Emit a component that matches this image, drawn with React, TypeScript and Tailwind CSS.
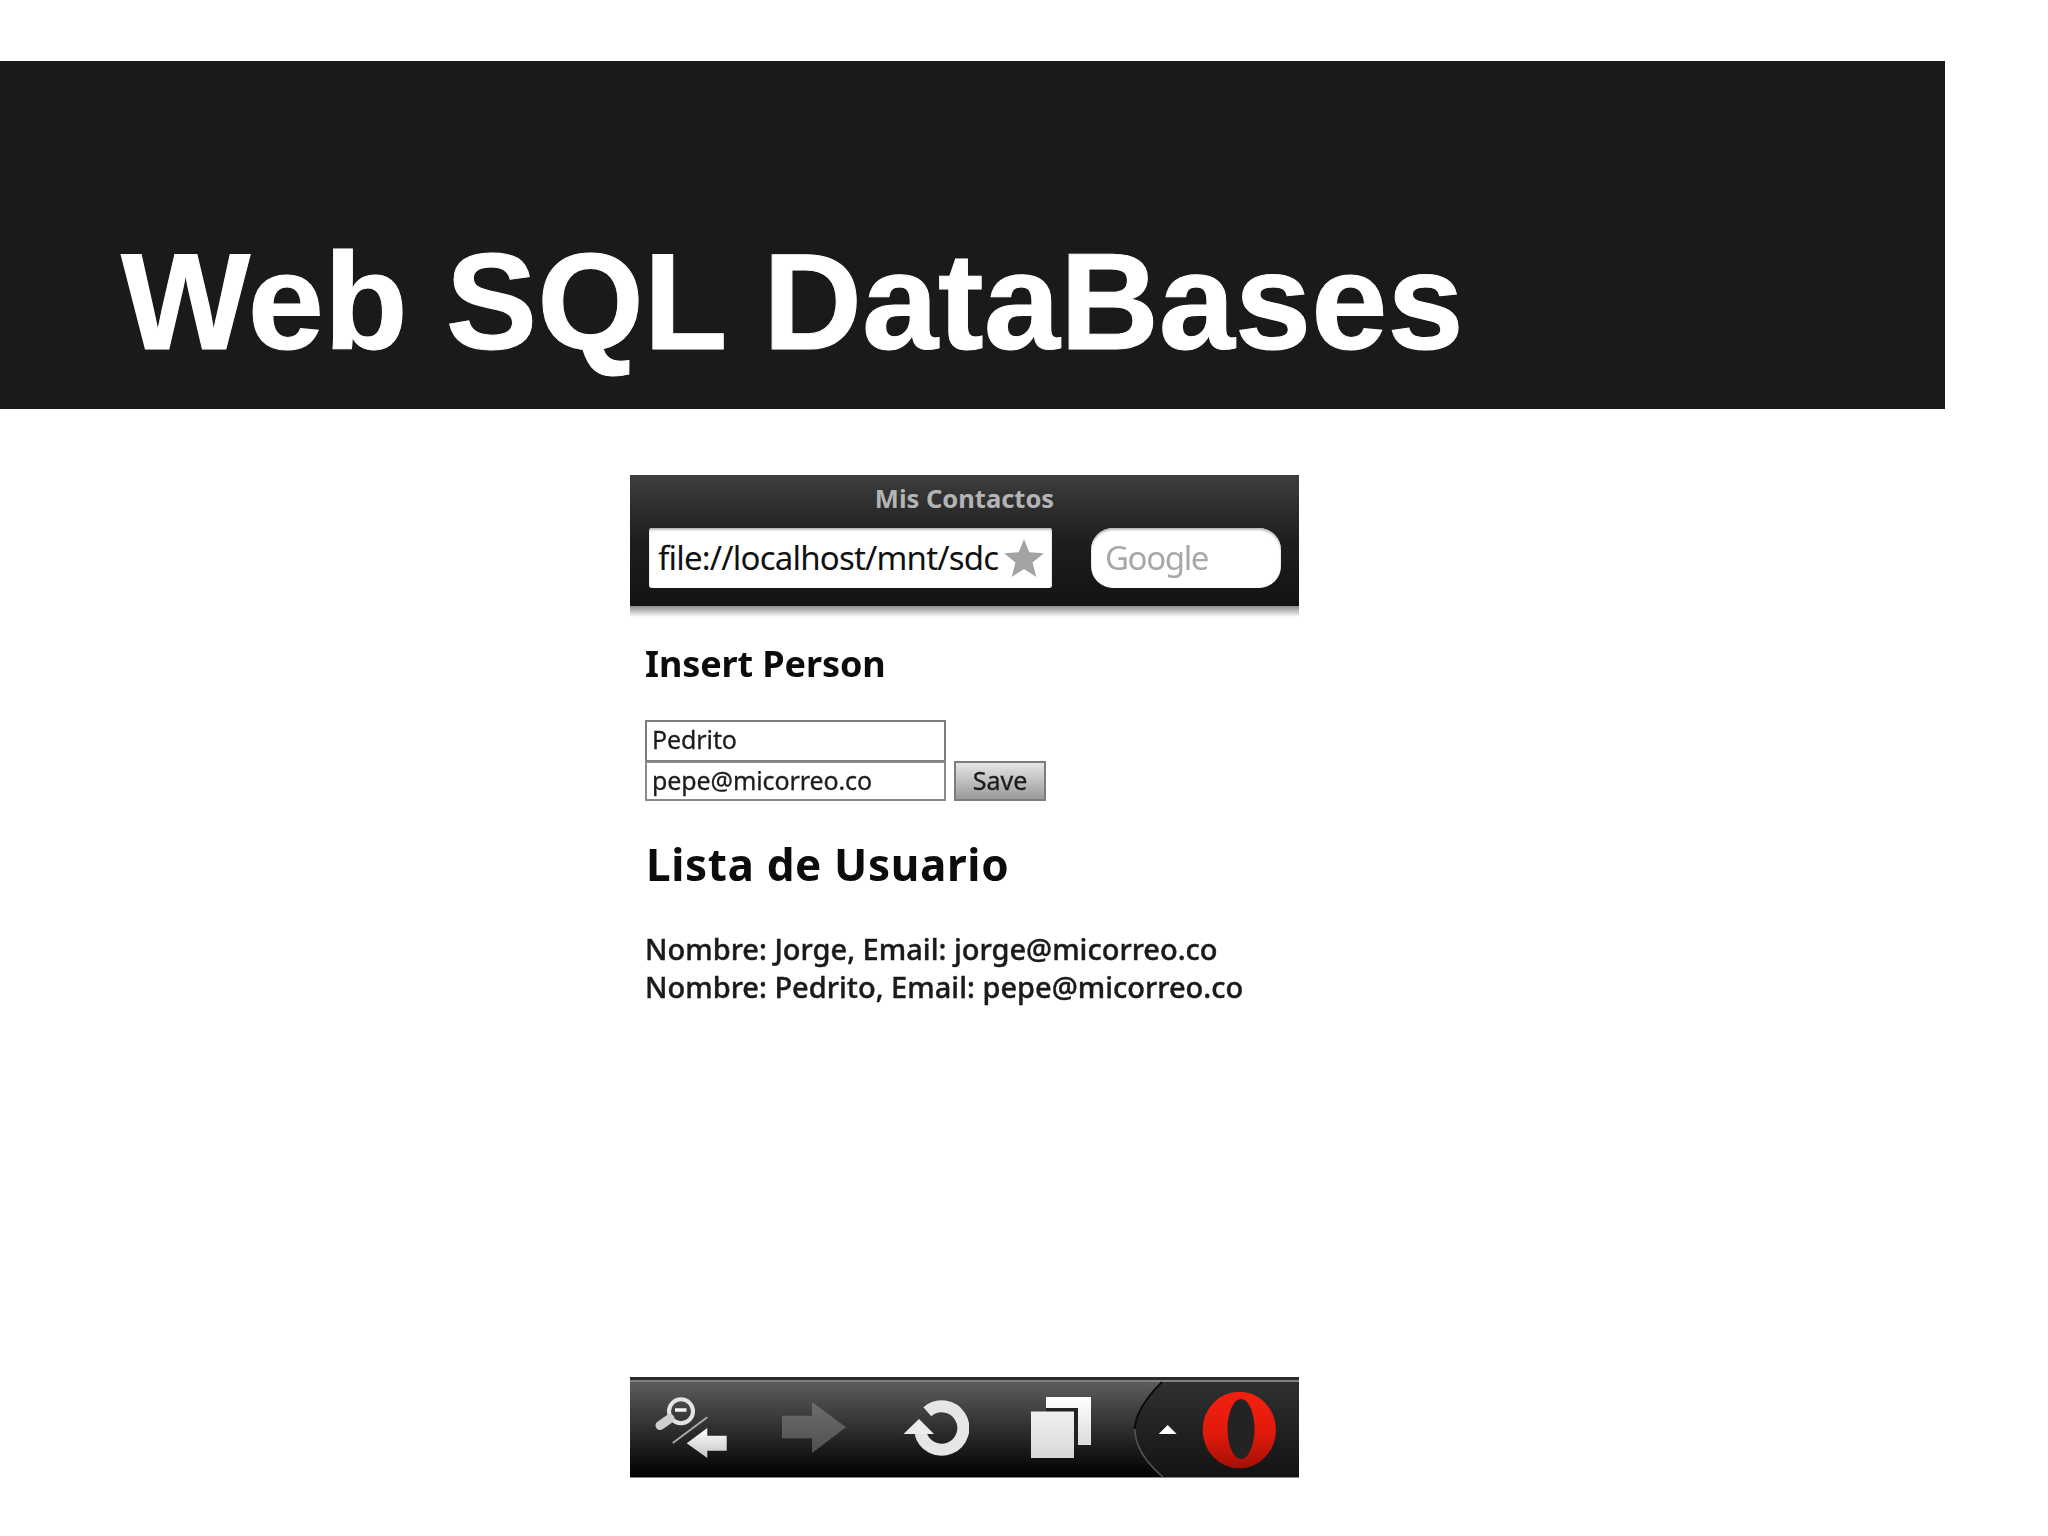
function ZoomBackIcon() {
  return (
    <svg width="72" height="62" viewBox="0 0 72 62" className="ml-[25px] shrink-0">
      <defs>
        <linearGradient id="zoomArrow" x1="0" y1="0" x2="0" y2="1">
          <stop offset="0" stopColor="#ffffff" />
          <stop offset="1" stopColor="#c4c4c4" />
        </linearGradient>
      </defs>
      <circle cx="26" cy="15.3" r="12" fill="none" stroke="#e4e4e4" strokeWidth="4" />
      <path d="M15 22.5 L5 29.5" stroke="#cfcfcf" strokeWidth="9" strokeLinecap="round" />
      <path d="M20 14 H31.5" stroke="#f4f4f4" strokeWidth="3.5" />
      <path d="M17.7 47 L52.3 21.3" stroke="#a8a8a8" strokeWidth="2" />
      <path d="M31.7 47.3 L52.3 32 V39.7 H71.7 V54.7 H52.3 V62 Z" fill="url(#zoomArrow)" />
    </svg>
  );
}

function ForwardIcon() {
  return (
    <svg width="64" height="51" viewBox="0 0 64 51" className="ml-[55px] shrink-0">
      <defs>
        <linearGradient id="forwardFill" x1="0" y1="0" x2="0" y2="1">
          <stop offset="0" stopColor="#6c6c6c" />
          <stop offset="1" stopColor="#505050" />
        </linearGradient>
      </defs>
      <path d="M0 13.7 H30 V0 L64 25.3 L30 51 V36.3 H0 Z" fill="url(#forwardFill)" />
    </svg>
  );
}

function ReloadIcon() {
  return (
    <svg width="66" height="59" viewBox="0 0 66 59" className="ml-[57px] shrink-0">
      <path d="M24.3 13.7 A21.7 21.7 0 1 1 17.5 35" fill="none" stroke="#e6e6e6" strokeWidth="12" />
      <path d="M16 21 L31 36 L0.5 36 Z" fill="#ececec" />
    </svg>
  );
}

function TabsIcon() {
  return (
    <svg width="60" height="61" viewBox="0 0 60 61" className="ml-[62px] shrink-0">
      <defs>
        <linearGradient id="tabsBack" x1="0" y1="0" x2="0" y2="1">
          <stop offset="0" stopColor="#ffffff" />
          <stop offset="1" stopColor="#dcdcdc" />
        </linearGradient>
        <linearGradient id="tabsFront" x1="0" y1="0" x2="0" y2="1">
          <stop offset="0" stopColor="#f0f0f0" />
          <stop offset="1" stopColor="#d8d8d8" />
        </linearGradient>
      </defs>
      <rect x="15" y="0" width="45" height="48" fill="url(#tabsBack)" />
      <path d="M15 11 H47 V48 H15 Z" fill="#222222" />
      <rect x="0" y="14.5" width="43" height="46.5" fill="url(#tabsFront)" />
    </svg>
  );
}

function OperaPanel() {
  return (
    <svg width="166" height="100" viewBox="0 0 166 100" className="ml-[42px] shrink-0">
      <defs>
        <linearGradient id="panelFill" x1="0" y1="0" x2="0" y2="1">
          <stop offset="0" stopColor="#303030" />
          <stop offset="1" stopColor="#131313" />
        </linearGradient>
        <linearGradient id="operaRed" x1="0" y1="0" x2="0" y2="1">
          <stop offset="0" stopColor="#f5200f" />
          <stop offset="0.55" stopColor="#e01a0c" />
          <stop offset="1" stopColor="#a50f06" />
        </linearGradient>
      </defs>
      <path d="M29 5 C10 24 2 40 2 52 C2 70 12 85 30 100 H166 V5 Z" fill="url(#panelFill)" />
      <path d="M29 5 C10 24 2 40 2 52" fill="none" stroke="#0c0c0c" strokeWidth="2" />
      <path d="M2 52 C2 70 12 85 30 100" fill="none" stroke="#555555" strokeWidth="1.5" />
      <path d="M25.7 57 L34.7 48 L43.7 57 Z" fill="#ffffff" />
      <ellipse cx="106.3" cy="53" rx="36.7" ry="38.3" fill="url(#operaRed)" />
      <ellipse cx="108" cy="52" rx="13.5" ry="30" fill="#232323" />
    </svg>
  );
}

export default function App() {
  return (
    <div className="w-[2048px] h-[1536px] bg-white overflow-hidden flow-root font-['Noto_Sans',sans-serif]">
      {/* Slide title */}
      <div className="mt-[61px] w-[1945px] h-[348px] bg-[#1a1a1a] flex items-end pl-[121px] pb-[32px]">
        <h1 className="font-['Liberation_Sans',Arial,sans-serif] font-bold text-white text-[137px] leading-[150px] whitespace-nowrap [-webkit-text-stroke:1px_#ffffff]">
          Web SQL DataBases
        </h1>
      </div>

      {/* Phone screenshot */}
      <div className="mt-[66px] ml-[630px] w-[669px] h-[1003px] flex flex-col blur-[0.7px]">
        <div className="h-[131px] bg-gradient-to-b from-[#3e3e3e] via-[#1e1e1e] to-[#131313]">
          <div className="h-[53px] pb-[6px] flex items-center justify-center text-[25.5px] font-bold text-[#b4b4b4]">
            Mis Contactos
          </div>
          <div className="flex">
            <div className="ml-[19px] w-[403px] h-[60px] bg-white rounded-[3px] shadow-[inset_0_2px_2px_#bbbbbb] flex items-center pl-[9px]">
              <div className="w-[341px] whitespace-nowrap text-[33px] tracking-[-0.8px] text-[#111111] leading-[60px]">
                file://localhost/mnt/sdc
              </div>
              <svg width="40" height="38" viewBox="0 0 24 23" className="ml-[5px] shrink-0">
                <path d="M12 0 L15.2 8 L24 8.6 L17.2 14.2 L19.4 23 L12 18.2 L4.6 23 L6.8 14.2 L0 8.6 L8.8 8 Z" fill="#a3a3a3" />
              </svg>
            </div>
            <div className="ml-[39px] w-[190px] h-[60px] bg-white rounded-[22px] shadow-[inset_0_2px_2px_#bbbbbb] flex items-center pl-[14px] text-[33px] tracking-[-1.4px] text-[#a8a8a8]">
              Google
            </div>
          </div>
        </div>
        <div className="h-[11px] bg-gradient-to-b from-[#8c8c8c] to-white"></div>

        <div className="pl-[15px]">
          <h2 className="mt-[25px] text-[36px] leading-[44px] tracking-[-0.1px] font-bold text-[#0c0c0c]">Insert Person</h2>
          <div className="mt-[34px] flex items-end">
            <div className="w-[301px] text-[25px] tracking-[-0.1px] text-[#1c1c1c] [-webkit-text-stroke:0.3px_#1c1c1c]">
              <div className="h-[42px] pb-[2px] border-2 border-[#7c7c7c] pl-[5px] flex items-center">Pedrito</div>
              <div className="h-[40px] -mt-[1px] border-2 border-[#8a8a8a] pl-[5px] flex items-center">pepe@micorreo.co</div>
            </div>
            <div className="ml-[8px] w-[92px] h-[40px] border-2 border-[#7c7c7c] bg-gradient-to-b from-[#e6e6e6] to-[#9a9a9a] flex items-center justify-center text-[25px] text-[#1c1c1c] [-webkit-text-stroke:0.3px_#1c1c1c]">
              Save
            </div>
          </div>
          <h2 className="mt-[37px] ml-[1px] text-[44px] leading-[52px] tracking-[0.65px] font-bold text-[#0c0c0c]">Lista de Usuario</h2>
          <div className="mt-[40px] text-[29px] leading-[38px] font-medium text-[#1a1a1a] [-webkit-text-stroke:0.4px_#1a1a1a]">
            <div>Nombre: Jorge, Email: jorge@micorreo.co</div>
            <div>Nombre: Pedrito, Email: pepe@micorreo.co</div>
          </div>
        </div>

        <div className="mt-auto h-[101px] border-b border-[#8a8a8a] bg-[linear-gradient(#2a2a2a_0,#2a2a2a_3px,#808080_3px,#808080_5px,#5c5c5c_5px,#000000_100%)] flex items-center">
          <ZoomBackIcon />
          <ForwardIcon />
          <ReloadIcon />
          <TabsIcon />
          <OperaPanel />
        </div>
      </div>
    </div>
  );
}
